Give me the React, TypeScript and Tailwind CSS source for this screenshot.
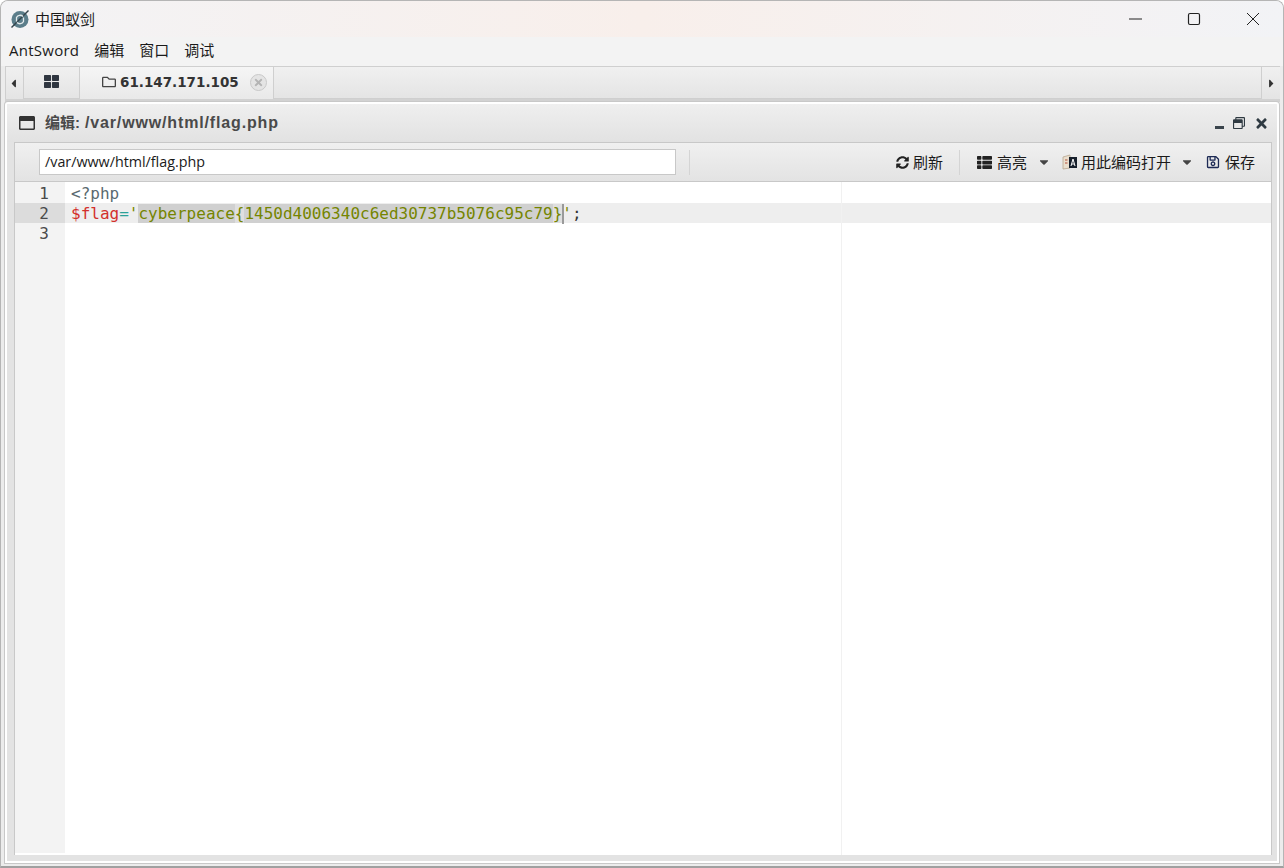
import { FaThLarge, FaRegFolder, FaSyncAlt, FaThList, FaRegSave, FaCaretDown, FaCaretLeft, FaCaretRight, FaRegWindowMaximize, FaRegWindowRestore, FaTimes } from "react-icons/fa";

const ui = "font-['Open_Sans','Noto_Sans_CJK_SC',sans-serif]";
const cjk = "font-['Noto_Sans_CJK_SC','Noto_Sans',sans-serif]";
const mono = "font-['DejaVu_Sans_Mono',monospace]";

function Logo() {
  return (
    <svg width="20" height="20" viewBox="0 0 20 20">
      <circle cx="10" cy="10.5" r="8.5" fill="#5b7d8a" />
      <path d="M1.5 18.5 L18.5 1.5" stroke="#33434b" strokeWidth="1.5" />
      <path d="M13 7.5a4 4 0 0 0-6.5 1v4M7 13.5a4 4 0 0 0 6.5-1v-4" fill="none" stroke="#e3eaec" strokeWidth="1.3" />
    </svg>
  );
}

function LanguageIcon() {
  return (
    <svg width="16" height="16" viewBox="0 0 16 16">
      <path d="M1 3l7-2v13l-7 1z" fill="#eadfce" stroke="#b7a68f" strokeWidth="0.8" />
      <path d="M7 3h8v11H7z" fill="#17202c" />
      <path d="M9 12l2-7 2 7M9.8 10h2.4" stroke="#fff" strokeWidth="1" fill="none" />
      <path d="M3 6h2.5M3 9h2.5" stroke="#b5533c" strokeWidth="1" />
    </svg>
  );
}

function Separator() {
  return <div className="w-px h-[25px] bg-[#d4d4d4]" />;
}

function App() {
  return (
    <div className="w-[1284px] h-[868px] overflow-hidden bg-[#ececec] border border-[#b5b5b5] border-b-2 border-b-[#a0a0a0] rounded-t-[8px] flex flex-col">
      {/* title bar */}
      <div className="h-[36px] shrink-0 flex items-center bg-gradient-to-r from-[#f3f3f5] via-[#f8efeb] to-[#f2f3f6]">
        <div className="ml-[9px]"><Logo /></div>
        <span className={`ml-[5px] text-[15px] text-[#1a1a1a] ${cjk}`}>中国蚁剑</span>
        <div className="ml-auto flex items-center text-black">
          <svg width="13" height="14" viewBox="0 0 13 14" className="mr-[45px]"><path d="M0 7h13" stroke="#222" strokeWidth="1" /></svg>
          <svg width="14" height="14" viewBox="0 0 14 14" className="mr-[45px]"><rect x="1.5" y="1.5" width="11" height="11" rx="1.5" fill="none" stroke="#222" strokeWidth="1.2" /></svg>
          <svg width="14" height="14" viewBox="0 0 14 14" className="mr-[23px]"><path d="M1 1l12 12M13 1L1 13" stroke="#222" strokeWidth="1" /></svg>
        </div>
      </div>

      {/* menu */}
      <div className={`h-[29px] shrink-0 flex items-center gap-[15px] pl-[8px] pb-[3px] bg-[#f3f3f3] text-[15px] text-[#1a1a1a] ${ui}`}>
        <span className="tracking-[0.25px]">AntSword</span>
        <span>编辑</span>
        <span>窗口</span>
        <span>调试</span>
      </div>

      {/* tabs */}
      <div className="h-[36px] shrink-0 ml-[4px] mr-[3px] flex items-stretch bg-gradient-to-b from-[#f0f0f0] to-[#e4e4e4] border-t border-[#cfcfcf] border-b-[3px] border-b-[#d2d2d2]">
        <div className="w-[19px] flex items-center justify-center border-x border-[#cfcfcf] text-[#333] text-[13px] pr-[2px]"><FaCaretLeft /></div>
        <div className="w-[56px] flex items-center justify-center border-r border-b border-[#cfcfcf] text-[#2f3640] text-[15px] pb-[2px]"><FaThLarge /></div>
        <div className="w-[194px] flex items-center bg-gradient-to-b from-[#f5f5f5] to-[#e9e9e9] border-r border-[#cfcfcf] pl-[22px] pb-[2px]">
          <FaRegFolder className="text-[#444] text-[14px]" />
          <span className="ml-[4px] text-[13.5px] font-bold text-[#333] font-['DejaVu_Sans',sans-serif]">61.147.171.105</span>
          <span className="ml-[11px] w-[17px] h-[17px] rounded-full border border-[#c8c8c8] bg-[#e4e4e4] flex items-center justify-center text-[#b4b4b4] text-[11px]"><FaTimes /></span>
        </div>
        <div className="flex-1 border-b border-[#cfcfcf]" />
        <div className="w-[19px] flex items-center justify-center border-l border-[#cfcfcf] text-[#333] text-[13px]"><FaCaretRight /></div>
      </div>

      {/* panel */}
      <div className="flex-1 mx-[4px] mb-[3px] flex flex-col bg-[#e3e3e3] border-2 border-white rounded-t-[3px] min-h-0 shadow-[0_0_0_1px_#c8c8c8]">
        <div className="h-[38px] shrink-0 flex items-center pl-[12px] pr-[8px] bg-gradient-to-b from-[#efefef] to-[#e2e2e2]">
          <FaRegWindowMaximize className="text-[#333] text-[16px]" />
          <span className="ml-[10px] text-[15px] font-bold text-[#4a4a4a] font-['Liberation_Sans','Noto_Sans_CJK_SC',sans-serif]">编辑:</span>
          <span className="ml-[5px] text-[16px] font-bold text-[#4a4a4a] font-['Liberation_Sans',sans-serif] tracking-[0.85px]">/var/www/html/flag.php</span>
          <div className="ml-auto flex items-center gap-[9px] text-[#2f3a42]">
            <div className="w-[9px] h-[3px] bg-[#3a444c] mt-[8px]" />
            <FaRegWindowRestore className="text-[12px]" />
            <FaTimes className="text-[15px]" />
          </div>
        </div>

        {/* editor box */}
        <div className="flex-1 ml-[7px] mr-[5px] mb-[6px] flex flex-col min-h-0 bg-white border border-[#c8c8c8] border-b-0">
          <div className={`h-[39px] shrink-0 flex items-center bg-gradient-to-b from-[#f0f0f0] to-[#e3e3e3] border-b border-[#c8c8c8] text-[15px] text-[#1a1a1a] ${ui}`}>
            <div className={`ml-[24px] w-[637px] h-[26px] bg-white border border-[#c8c8c8] flex items-center pl-[5px] text-[14.3px] text-[#1a1a1a] ${ui}`}>/var/www/html/flag.php</div>
            <div className="ml-[13px]"><Separator /></div>
            <div className="ml-auto flex items-center">
              <FaSyncAlt className="text-[#222] text-[13px]" />
              <span className={`ml-[4px] ${cjk}`}>刷新</span>
              <div className="ml-[16px]"><Separator /></div>
              <FaThList className="ml-[17px] text-[#222] text-[15px]" />
              <span className={`ml-[5px] ${cjk}`}>高亮</span>
              <FaCaretDown className="ml-[10px] text-[#444] text-[14px]" />
              <span className="ml-[11px]"><LanguageIcon /></span>
              <span className={`ml-[3px] ${cjk}`}>用此编码打开</span>
              <FaCaretDown className="ml-[9px] text-[#444] text-[14px]" />
              <FaRegSave className="ml-[12px] text-[#1d2a55] text-[14px]" />
              <span className={`ml-[5px] mr-[16px] ${cjk}`}>保存</span>
            </div>
          </div>

          {/* code */}
          <div className={`relative flex-1 flex min-h-0 text-[16px] leading-[22px] ${mono}`}>
            <div className="w-[50px] shrink-0 bg-[#f3f3f3] mb-[2px] pt-[1px] text-right text-[#4a4a4a]">
              <div className="h-[20px] pr-[16px]">1</div>
              <div className="h-[20px] pr-[16px] bg-[#dcdcdc]">2</div>
              <div className="h-[20px] pr-[16px]">3</div>
            </div>
            <div className="flex-1 pt-[1px] text-[#333]">
              <div className="h-[20px] pl-[6px] text-[#5a6a70]">&lt;?php</div>
              <div className="h-[20px] pl-[6px] bg-[#eeeeee] whitespace-pre">
                <span className="text-[#d3302c]">$flag</span>
                <span className="text-[#2aa198]">=</span>
                <span className="text-[#7a8a00]">'</span>
                <span className="bg-[#d0d0d0] text-[#758500]">cyberpeace<span className="bg-[#dfdfdf]">{"{"}</span>1450d4006340c6ed30737b5076c95c79<span className="bg-[#dfdfdf]">{"}"}</span></span>
                <span className="relative text-[#7a8a00]">'<span className="absolute left-0 top-0 h-[20px] w-[2px] bg-[#9a9a9a]" /></span>
                <span className="text-[#333]">;</span>
              </div>
            </div>
            <div className="absolute left-[826px] top-0 bottom-0 w-px bg-[#f1f1f1]" />
          </div>
        </div>
      </div>
    </div>
  );
}

export default App;
